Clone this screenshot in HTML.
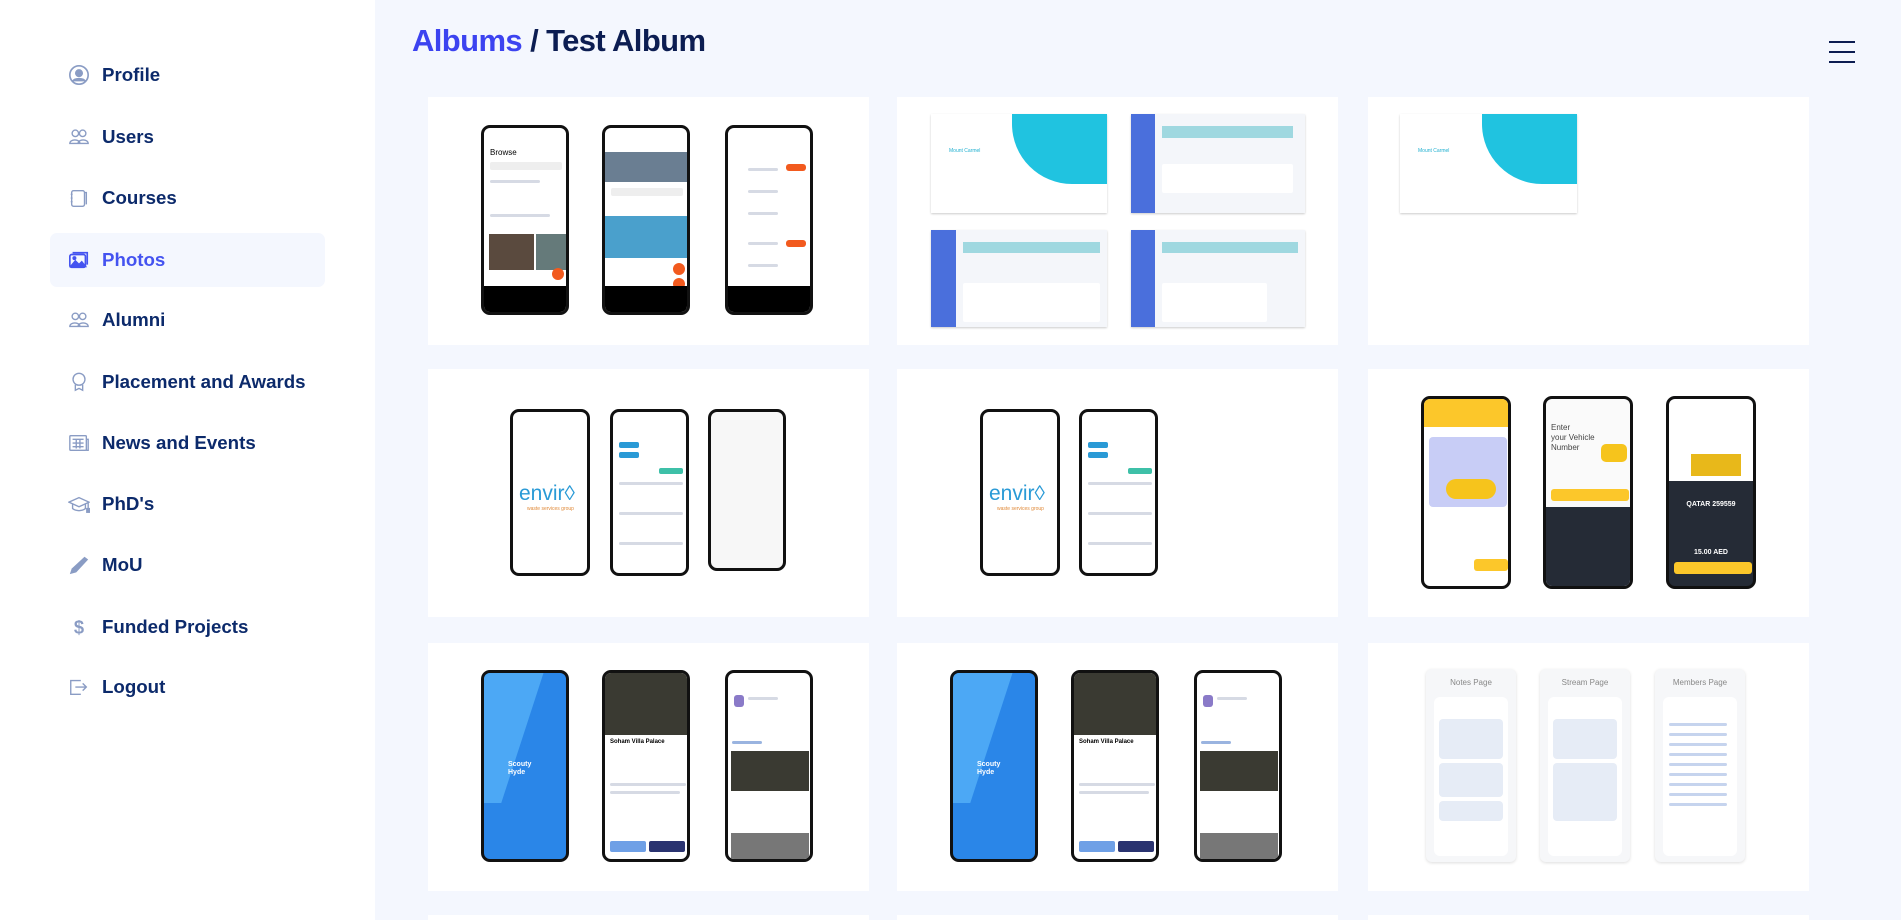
<!DOCTYPE html>
<html><head><meta charset="utf-8"><style>
*{box-sizing:border-box;margin:0;padding:0}
html{width:1901px;height:920px;overflow:hidden}
body{width:1901px;height:920px;overflow:hidden;background:#f4f7fe;font-family:"Liberation Sans",sans-serif;position:relative}
.side{position:absolute;left:0;top:0;width:375px;height:920px;background:#fff}
.item{position:absolute;left:50px;width:275px;height:54px;display:flex;align-items:center;padding-left:18px;font-weight:bold;font-size:18.7px;color:#0c2a6b}
.item svg{width:22px;height:22px;margin-right:12px;flex:none}
.item.act{background:#f4f7fe;border-radius:7px;color:#4453f0}
h1{position:absolute;left:412px;top:23px;font-size:31px;font-weight:bold;color:#0c1d52;letter-spacing:-0.6px}
h1 span{color:#3c43f0}
.ham{position:absolute;left:1829px;top:41px;width:26px}
.ham i{display:block;height:2px;background:#0c1d52;margin-bottom:8px}
.card{position:absolute;width:441px;height:248px;background:#fff;overflow:hidden}
.ph{position:absolute;border:3px solid #111;border-radius:9px;background:#fff;overflow:hidden}
.ph .nav{position:absolute;left:0;right:0;bottom:0;height:14%;background:#000}
.ln{position:absolute;height:3px;background:#d6dae4;border-radius:2px}
.desk{position:absolute;background:#f4f6fa;box-shadow:0 1px 2px #ccc;overflow:hidden}
.ds{position:absolute;left:0;top:0;bottom:0;width:14%;background:#4a6fdc}
.tile{position:absolute;height:12%;background:#9fd8e0}
.pnl{position:absolute;background:#f6f7f9;border-radius:6px;box-shadow:0 1px 3px #ddd}
.pnl .t{position:absolute;top:9px;left:0;right:0;text-align:center;font-size:8px;color:#888}
.pnl .in{position:absolute;left:8px;right:8px;top:28px;bottom:6px;background:#fff;border-radius:6px}
</style></head><body>
<div class="side">
<div class="item" style="top:48px"><svg viewBox="0 0 24 24" fill="none" stroke="#8a9cc4" stroke-width="1.8"><circle cx="12" cy="12" r="10"/><circle cx="12" cy="10" r="3.5" fill="#8a9cc4"/><path d="M5 19c2-4 12-4 14 0" fill="#8a9cc4"/></svg>Profile</div>
<div class="item" style="top:110px"><svg viewBox="0 0 24 24" fill="none" stroke="#8a9cc4" stroke-width="1.5"><circle cx="8" cy="8" r="3.5"/><circle cx="16" cy="8" r="3.5"/><path d="M2 19c0-5 11-5 11 0zM11 19c0-5 11-5 11 0z"/></svg>Users</div>
<div class="item" style="top:171px"><svg viewBox="0 0 24 24" fill="none" stroke="#8a9cc4" stroke-width="1.5"><rect x="4" y="4" width="14" height="17" rx="2"/><path d="M18 6h2v13"/><path d="M3 8h2M3 12h2M3 16h2"/></svg>Courses</div>
<div class="item act" style="top:233px"><svg viewBox="0 0 24 24" fill="none" stroke="#4453f0" stroke-width="1.8"><rect x="2" y="6" width="17" height="14" rx="2"/><path d="M5 4h16v13"/><path d="M3 19l5-6 4 4 3-3 4 5z" fill="#4453f0"/><circle cx="7" cy="10" r="1.3" fill="#4453f0"/></svg>Photos</div>
<div class="item" style="top:293px"><svg viewBox="0 0 24 24" fill="none" stroke="#8a9cc4" stroke-width="1.5"><circle cx="8" cy="8" r="3.5"/><circle cx="16" cy="8" r="3.5"/><path d="M2 19c0-5 11-5 11 0zM11 19c0-5 11-5 11 0z"/></svg>Alumni</div>
<div class="item" style="top:355px"><svg viewBox="0 0 24 24" fill="none" stroke="#8a9cc4" stroke-width="1.5"><circle cx="12" cy="9" r="6.5"/><path d="M8 15v6l4-2 4 2v-6"/></svg>Placement and Awards</div>
<div class="item" style="top:416px"><svg viewBox="0 0 24 24" fill="none" stroke="#8a9cc4" stroke-width="1.5"><rect x="2" y="4" width="18" height="16" rx="1"/><path d="M20 8h2v12h-2M5 8h12M5 12h12M5 16h12M9 8v10M13 8v10"/></svg>News and Events</div>
<div class="item" style="top:477px"><svg viewBox="0 0 24 24" fill="none" stroke="#8a9cc4" stroke-width="1.5"><path d="M1 10l11-5 11 5-11 5z"/><path d="M5 12v5c4 3 10 3 14 0v-5"/><path d="M22 10v8" /><rect x="20.5" y="17" width="3" height="4" fill="#8a9cc4"/></svg>PhD's</div>
<div class="item" style="top:538px"><svg viewBox="0 0 24 24"><path d="M2 22l2-6L18 3l4 3L9 20z" fill="#8a9cc4"/></svg>MoU</div>
<div class="item" style="top:600px"><svg viewBox="0 0 24 24"><text x="12" y="19" text-anchor="middle" font-size="20" font-family="Liberation Sans" fill="#8a9cc4">$</text></svg>Funded Projects</div>
<div class="item" style="top:660px"><svg viewBox="0 0 24 24" fill="none" stroke="#8a9cc4" stroke-width="1.5"><path d="M14 5H3v15h11"/><path d="M8 12h11M16 8l4 4-4 4"/></svg>Logout</div>
</div>
<h1><span>Albums</span> / Test Album</h1>
<div class="ham"><i></i><i></i><i></i></div>

<!-- row 1 -->
<div class="card" style="left:428px;top:97px">
 <div class="ph" style="left:53px;top:28px;width:88px;height:190px"><div style="position:absolute;left:6px;top:20px;font-size:8px">Browse</div><div class="ln" style="left:6px;top:34px;width:72px;height:8px;background:#eee"></div><div class="ln" style="left:6px;top:52px;width:50px"></div><div class="ln" style="left:6px;top:86px;width:60px"></div><div style="position:absolute;left:5px;top:106px;width:45px;height:36px;background:#5a4a3e"></div><div style="position:absolute;left:52px;top:106px;width:30px;height:36px;background:#657a7a"></div><div style="position:absolute;left:68px;top:140px;width:12px;height:12px;border-radius:50%;background:#f25a1e"></div><div class="nav"></div></div>
 <div class="ph" style="left:174px;top:28px;width:88px;height:190px"><div style="position:absolute;left:0;top:24px;width:100%;height:30px;background:#6a7e92"></div><div class="ln" style="left:6px;top:60px;width:72px;height:8px;background:#eee"></div><div style="position:absolute;left:0;top:88px;width:100%;height:42px;background:#4aa0cc"></div><div style="position:absolute;left:68px;top:135px;width:12px;height:12px;border-radius:50%;background:#f25a1e"></div><div style="position:absolute;left:68px;top:150px;width:12px;height:12px;border-radius:50%;background:#f25a1e"></div><div class="nav"></div></div>
 <div class="ph" style="left:297px;top:28px;width:88px;height:190px"><div style="position:absolute;left:58px;top:36px;width:20px;height:7px;background:#f25a1e;border-radius:3px"></div><div style="position:absolute;left:58px;top:112px;width:20px;height:7px;background:#f25a1e;border-radius:3px"></div><div class="ln" style="left:20px;top:40px;width:30px"></div><div class="ln" style="left:20px;top:62px;width:30px"></div><div class="ln" style="left:20px;top:84px;width:30px"></div><div class="ln" style="left:20px;top:114px;width:30px"></div><div class="ln" style="left:20px;top:136px;width:30px"></div><div class="nav"></div></div>
</div>
<div class="card" style="left:897px;top:97px">
 <div class="desk" style="left:34px;top:17px;width:176px;height:99px;background:#fff"><div style="position:absolute;right:0;top:0;width:95px;height:70px;background:#20c3e0;border-radius:0 0 0 60px"></div><div style="position:absolute;left:18px;top:34px;font-size:5px;color:#20b0d0">Mount Carmel</div></div>
 <div class="desk" style="left:234px;top:17px;width:174px;height:99px"><div class="ds"></div><div class="tile" style="left:18%;top:12%;width:75%"></div><div class="ln" style="left:18%;top:50%;width:75%;height:30%;background:#fff"></div></div>
 <div class="desk" style="left:34px;top:133px;width:176px;height:97px"><div class="ds"></div><div class="tile" style="left:18%;top:12%;width:78%"></div><div class="ln" style="left:18%;top:55%;width:78%;height:40%;background:#fff"></div></div>
 <div class="desk" style="left:234px;top:133px;width:174px;height:97px"><div class="ds"></div><div class="tile" style="left:18%;top:12%;width:78%"></div><div class="ln" style="left:18%;top:55%;width:60%;height:40%;background:#fff"></div></div>
</div>
<div class="card" style="left:1368px;top:97px">
 <div class="desk" style="left:32px;top:17px;width:177px;height:99px;background:#fff"><div style="position:absolute;right:0;top:0;width:95px;height:70px;background:#20c3e0;border-radius:0 0 0 60px"></div><div style="position:absolute;left:18px;top:34px;font-size:5px;color:#20b0d0">Mount Carmel</div></div>
</div>

<!-- row 2 -->
<div class="card" style="left:428px;top:369px">
 <div class="ph" style="left:82px;top:40px;width:80px;height:167px"><div style="position:absolute;left:6px;top:70px;font-size:21px;color:#2a9ad6">envir◊</div><div style="position:absolute;left:14px;top:94px;font-size:5px;color:#e08a3a">waste services group</div></div>
 <div class="ph" style="left:182px;top:40px;width:79px;height:167px"><div class="ln" style="left:6px;top:30px;width:20px;height:6px;background:#2a9ad6"></div><div class="ln" style="left:6px;top:40px;width:20px;height:6px;background:#2a9ad6"></div><div class="ln" style="left:46px;top:56px;width:24px;height:6px;background:#3ec0a8"></div><div class="ln" style="left:6px;top:70px;width:64px"></div><div class="ln" style="left:6px;top:100px;width:64px"></div><div class="ln" style="left:6px;top:130px;width:64px"></div></div>
 <div class="ph" style="left:280px;top:40px;width:78px;height:162px;background:#f7f7f7"></div>
</div>
<div class="card" style="left:897px;top:369px">
 <div class="ph" style="left:83px;top:40px;width:80px;height:167px"><div style="position:absolute;left:6px;top:70px;font-size:21px;color:#2a9ad6">envir◊</div><div style="position:absolute;left:14px;top:94px;font-size:5px;color:#e08a3a">waste services group</div></div>
 <div class="ph" style="left:182px;top:40px;width:79px;height:167px"><div class="ln" style="left:6px;top:30px;width:20px;height:6px;background:#2a9ad6"></div><div class="ln" style="left:6px;top:40px;width:20px;height:6px;background:#2a9ad6"></div><div class="ln" style="left:46px;top:56px;width:24px;height:6px;background:#3ec0a8"></div><div class="ln" style="left:6px;top:70px;width:64px"></div><div class="ln" style="left:6px;top:100px;width:64px"></div><div class="ln" style="left:6px;top:130px;width:64px"></div></div>
</div>
<div class="card" style="left:1368px;top:369px">
 <div class="ph" style="left:53px;top:27px;width:90px;height:193px"><div style="position:absolute;left:0;top:0;width:100%;height:28px;background:#fcc72a"></div><div style="position:absolute;left:5px;top:38px;width:78px;height:70px;background:#c8cdf6;border-radius:4px"></div><div style="position:absolute;left:22px;top:80px;width:50px;height:20px;background:#f6c41c;border-radius:10px"></div><div style="position:absolute;left:50px;top:160px;width:34px;height:12px;background:#fcc72a;border-radius:3px"></div></div>
 <div class="ph" style="left:175px;top:27px;width:90px;height:193px;background:#fafafa"><div style="position:absolute;left:5px;top:24px;font-size:8px;color:#444;line-height:10px">Enter<br>your Vehicle<br>Number</div><div style="position:absolute;left:55px;top:45px;width:26px;height:18px;background:#f6c41c;border-radius:5px"></div><div style="position:absolute;left:5px;top:90px;width:78px;height:12px;background:#fcc72a;border-radius:3px"></div><div style="position:absolute;left:0;top:108px;width:100%;height:85px;background:#252b36"></div></div>
 <div class="ph" style="left:298px;top:27px;width:90px;height:193px;background:#252b36"><div style="position:absolute;left:0;top:0;width:100%;height:82px;background:#fff"></div><div style="position:absolute;left:22px;top:55px;width:50px;height:22px;background:#e8b81a"></div><div style="position:absolute;left:0;top:102px;width:100%;text-align:center;font-size:7px;color:#fff;font-weight:bold">QATAR 259559</div><div style="position:absolute;left:0;top:150px;width:100%;text-align:center;font-size:7px;color:#fff;font-weight:bold">15.00 AED</div><div style="position:absolute;left:5px;top:163px;width:78px;height:12px;background:#fcc72a;border-radius:3px"></div></div>
</div>

<!-- row 3 -->
<div class="card" style="left:428px;top:643px">
 <div class="ph" style="left:53px;top:27px;width:88px;height:192px;background:#2a86e8"><div style="position:absolute;left:-20px;top:-10px;width:60px;height:140px;background:#4ca8f5;transform:skewX(-18deg)"></div><div style="position:absolute;left:24px;top:88px;font-size:7px;color:#fff;font-weight:bold;line-height:8px">Scouty<br>Hyde</div></div>
 <div class="ph" style="left:174px;top:27px;width:88px;height:192px"><div style="position:absolute;left:0;top:0;width:100%;height:62px;background:#3a3a32"></div><div style="position:absolute;left:5px;top:66px;font-size:6px;font-weight:bold">Soham Villa Palace</div><div class="ln" style="left:5px;top:110px;width:76px"></div><div class="ln" style="left:5px;top:118px;width:70px"></div><div style="position:absolute;left:5px;top:168px;width:36px;height:11px;background:#6fa0e6;border-radius:2px"></div><div style="position:absolute;left:44px;top:168px;width:36px;height:11px;background:#2a3370;border-radius:2px"></div></div>
 <div class="ph" style="left:297px;top:27px;width:88px;height:192px"><div style="position:absolute;left:6px;top:22px;width:10px;height:12px;background:#8a7ac8;border-radius:3px"></div><div class="ln" style="left:20px;top:24px;width:30px"></div><div class="ln" style="left:4px;top:68px;width:30px;background:#9ab4e0"></div><div style="position:absolute;left:3px;top:78px;width:78px;height:40px;background:#3a3a32"></div><div style="position:absolute;left:3px;top:160px;width:78px;height:30px;background:#777"></div></div>
</div>
<div class="card" style="left:897px;top:643px">
 <div class="ph" style="left:53px;top:27px;width:88px;height:192px;background:#2a86e8"><div style="position:absolute;left:-20px;top:-10px;width:60px;height:140px;background:#4ca8f5;transform:skewX(-18deg)"></div><div style="position:absolute;left:24px;top:88px;font-size:7px;color:#fff;font-weight:bold;line-height:8px">Scouty<br>Hyde</div></div>
 <div class="ph" style="left:174px;top:27px;width:88px;height:192px"><div style="position:absolute;left:0;top:0;width:100%;height:62px;background:#3a3a32"></div><div style="position:absolute;left:5px;top:66px;font-size:6px;font-weight:bold">Soham Villa Palace</div><div class="ln" style="left:5px;top:110px;width:76px"></div><div class="ln" style="left:5px;top:118px;width:70px"></div><div style="position:absolute;left:5px;top:168px;width:36px;height:11px;background:#6fa0e6;border-radius:2px"></div><div style="position:absolute;left:44px;top:168px;width:36px;height:11px;background:#2a3370;border-radius:2px"></div></div>
 <div class="ph" style="left:297px;top:27px;width:88px;height:192px"><div style="position:absolute;left:6px;top:22px;width:10px;height:12px;background:#8a7ac8;border-radius:3px"></div><div class="ln" style="left:20px;top:24px;width:30px"></div><div class="ln" style="left:4px;top:68px;width:30px;background:#9ab4e0"></div><div style="position:absolute;left:3px;top:78px;width:78px;height:40px;background:#3a3a32"></div><div style="position:absolute;left:3px;top:160px;width:78px;height:30px;background:#777"></div></div>
</div>
<div class="card" style="left:1368px;top:643px">
 <div class="pnl" style="left:58px;top:26px;width:90px;height:193px"><div class="t">Notes Page</div><div class="in"><div style="position:absolute;left:5px;top:22px;width:64px;height:40px;background:#e6ecf6;border-radius:4px"></div><div style="position:absolute;left:5px;top:66px;width:64px;height:34px;background:#e6ecf6;border-radius:4px"></div><div style="position:absolute;left:5px;top:104px;width:64px;height:20px;background:#e6ecf6;border-radius:4px"></div></div></div>
 <div class="pnl" style="left:172px;top:26px;width:90px;height:193px"><div class="t">Stream Page</div><div class="in"><div style="position:absolute;left:5px;top:22px;width:64px;height:40px;background:#e6ecf6;border-radius:4px"></div><div style="position:absolute;left:5px;top:66px;width:64px;height:58px;background:#e6ecf6;border-radius:4px"></div></div></div>
 <div class="pnl" style="left:287px;top:26px;width:90px;height:193px"><div class="t">Members Page</div><div class="in"><div class="ln" style="left:6px;top:26px;width:58px;background:#c6d4ee"></div><div class="ln" style="left:6px;top:36px;width:58px;background:#c6d4ee"></div><div class="ln" style="left:6px;top:46px;width:58px;background:#c6d4ee"></div><div class="ln" style="left:6px;top:56px;width:58px;background:#c6d4ee"></div><div class="ln" style="left:6px;top:66px;width:58px;background:#c6d4ee"></div><div class="ln" style="left:6px;top:76px;width:58px;background:#c6d4ee"></div><div class="ln" style="left:6px;top:86px;width:58px;background:#c6d4ee"></div><div class="ln" style="left:6px;top:96px;width:58px;background:#c6d4ee"></div><div class="ln" style="left:6px;top:106px;width:58px;background:#c6d4ee"></div></div></div>
</div>

<!-- row 4 partial -->
<div class="card" style="left:428px;top:915px;height:5px"></div>
<div class="card" style="left:897px;top:915px;height:5px"></div>
<div class="card" style="left:1368px;top:915px;height:5px"></div>
</body></html>
